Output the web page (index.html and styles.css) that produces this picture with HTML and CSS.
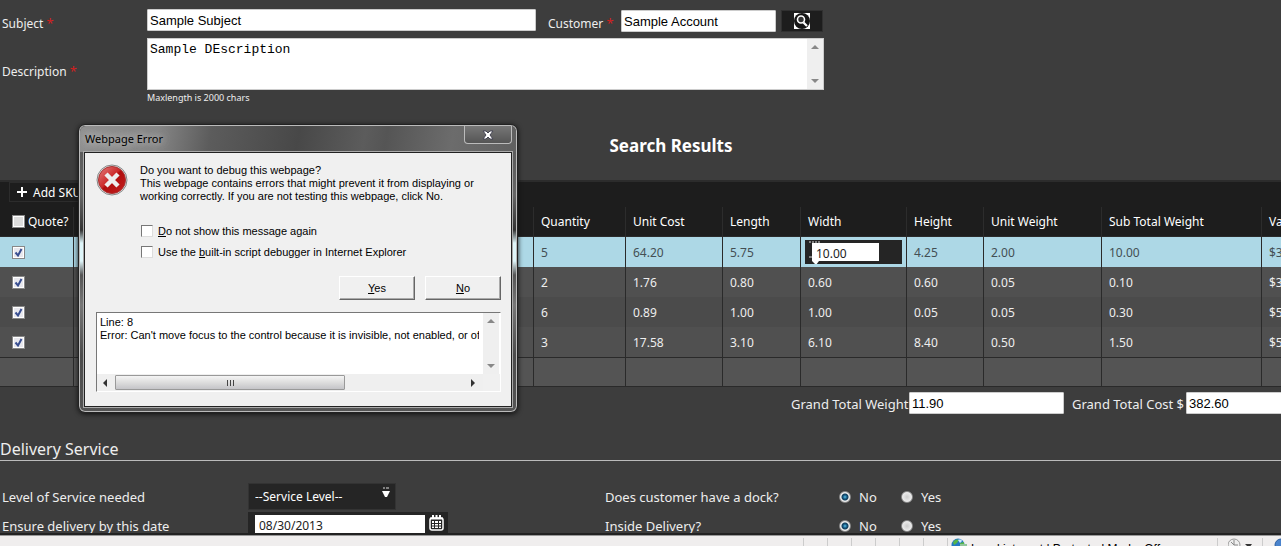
FILE: index.html
```html
<!DOCTYPE html>
<html lang="en">
<head>
  <meta charset="UTF-8">
  <title>Quote Request</title>
  <link rel="stylesheet" href="styles.css">
</head>
<body>

  <main class="page">

    <form class="request-form">
      <div class="form-row">
        <label class="form-label" for="subject">Subject <span class="required">*</span></label>
        <input class="text-box subject" type="text" id="subject" value="Sample Subject">
        <label class="customer-label" for="customer">Customer <span class="required">*</span></label>
        <input class="text-box customer" type="text" id="customer" value="Sample Account">
        <button class="lookup" type="button" aria-label="Find customer">
          <svg width="16" height="16" viewBox="0 0 16 16">
            <rect width="16" height="16" fill="#fff"/>
            <circle cx="8" cy="8" r="8" fill="#151515"/>
            <circle cx="7" cy="6.500" r="3.500" fill="#333" stroke="#fff" stroke-width="1.600"/>
            <path d="M9.500 9.500L13 13" stroke="#fff" stroke-width="2.200"/>
          </svg>
        </button>
      </div>
      <div class="form-row description-row">
        <label class="form-label" for="description">Description <span class="required">*</span></label>
        <div class="description-box">
          <textarea id="description">Sample DEscription</textarea>
          <div class="scroll-y"><i class="arrow up"></i><i class="arrow down"></i></div>
        </div>
      </div>
      <p class="hint">Maxlength is 2000 chars</p>
    </form>

    <h2 class="results-title">Search Results</h2>

    <div class="grid-wrap">
      <div class="grid-toolbar">
        <button class="add-sku" type="button">
          <svg width="12" height="12" viewBox="0 0 12 12"><path d="M6 1v10M1 6h10" stroke="#fff" stroke-width="2"/></svg>
          Add SKU
        </button>
      </div>
      <table class="grid">
        <colgroup>
          <col class="col-quote"><col class="col-item"><col class="col-qty"><col class="col-cost"><col class="col-length">
          <col class="col-width"><col class="col-height"><col class="col-weight"><col class="col-subtotal"><col class="col-value">
        </colgroup>
        <thead>
          <tr>
            <th><label class="quote-all"><input class="tick" type="checkbox">Quote?</label></th>
            <th></th><th>Quantity</th><th>Unit Cost</th><th>Length</th><th>Width</th><th>Height</th><th>Unit Weight</th><th>Sub Total Weight</th><th>Value</th>
          </tr>
        </thead>
        <tbody>
          <tr class="selected">
            <td><input class="tick" type="checkbox" aria-label="Quote" checked></td>
            <td></td><td>5</td><td>64.20</td><td>5.75</td>
            <td class="edit-cell">
              <div class="editor">
                <input type="text" aria-label="Width" value="10.00">
                <svg class="spinner" width="16" height="24" viewBox="0 0 16 24">
                  <path d="M4 2h2M7 2h2M10 2h2M13 2h2M4 17h3" stroke="#ddd"/>
                  <path d="M7 21h7l-3 4z" fill="#fff"/>
                </svg>
              </div>
            </td>
            <td>4.25</td><td>2.00</td><td>10.00</td><td>$369</td>
          </tr>
          <tr>
            <td><input class="tick" type="checkbox" aria-label="Quote" checked></td>
            <td></td><td>2</td><td>1.76</td><td>0.80</td><td>0.60</td><td>0.60</td><td>0.05</td><td>0.10</td><td>$3.52</td>
          </tr>
          <tr class="alt">
            <td><input class="tick" type="checkbox" aria-label="Quote" checked></td>
            <td></td><td>6</td><td>0.89</td><td>1.00</td><td>1.00</td><td>0.05</td><td>0.05</td><td>0.30</td><td>$5.34</td>
          </tr>
          <tr>
            <td><input class="tick" type="checkbox" aria-label="Quote" checked></td>
            <td></td><td>3</td><td>17.58</td><td>3.10</td><td>6.10</td><td>8.40</td><td>0.50</td><td>1.50</td><td>$52.74</td>
          </tr>
        </tbody>
        <tfoot>
          <tr><td></td><td></td><td></td><td></td><td></td><td></td><td></td><td></td><td></td><td></td></tr>
        </tfoot>
      </table>
    </div>

    <div class="totals">
      <label for="totalWeight">Grand Total Weight</label>
      <input class="text-box total" type="text" id="totalWeight" value="11.90">
      <label class="cost-label" for="totalCost">Grand Total Cost $</label>
      <input class="text-box total" type="text" id="totalCost" value="382.60">
    </div>

    <h3 class="section-title">Delivery Service</h3>

    <form class="delivery">
      <label for="service">Level of Service needed</label>
      <div class="select-box">
        <select id="service"><option>--Service Level--</option></select>
        <svg class="select-arrow" width="8" height="11" viewBox="0 0 8 11">
          <path d="M1 1h2M4 1h3" stroke="#ddd"/><path d="M0 4h8l-3 6h-2z" fill="#fff"/>
        </svg>
      </div>
      <span>Does customer have a dock?</span>
      <div class="choices">
        <label><input type="radio" name="dock" checked>No</label>
        <label><input type="radio" name="dock">Yes</label>
      </div>

      <label for="deliveryDate">Ensure delivery by this date</label>
      <div class="date-box">
        <input type="text" id="deliveryDate" value="08/30/2013">
        <button type="button" aria-label="Pick date">
          <svg width="15" height="16" viewBox="0 0 15 16">
            <rect x="1" y="3" width="13" height="12" rx="2" fill="none" stroke="#fff" stroke-width="1.500"/>
            <path d="M1 3.500h13M4 0v3M7.500 0v3M11 0v3" stroke="#fff" stroke-width="2"/>
            <path d="M3 6h9v7H3z" fill="#fff"/>
            <path d="M3 8.500h9M3 11h9M5.500 6v7M9.500 6v7" stroke="#252525"/>
          </svg>
        </button>
      </div>
      <span>Inside Delivery?</span>
      <div class="choices">
        <label><input type="radio" name="inside" checked>No</label>
        <label><input type="radio" name="inside">Yes</label>
      </div>
    </form>
  </main>

  <footer class="status-bar">
    <span class="pane"></span><span class="pane"></span><span class="pane"></span>
    <span class="pane"></span><span class="pane"></span><span class="pane"></span>
    <span class="zone">
      <svg width="16" height="16" viewBox="0 0 16 16">
        <circle cx="7" cy="7" r="6.500" fill="#2479c4"/>
        <path d="M2 4c2-3 5-3 6-2L6 5 3 7zM9 5l4-1v5l-3 2z" fill="#55b649"/>
        <path d="M7 2c2-1 4 0 4 1L9 5z" fill="#cdeaff"/>
        <rect x="9" y="6" width="7" height="6" fill="#90c49a"/>
      </svg>
      Local intranet | Protected Mode: Off
    </span>
    <span class="privacy">
      <svg width="25" height="14" viewBox="0 0 25 14">
        <circle cx="6" cy="7" r="6" fill="#eee" stroke="#999"/><path d="M6 2v5h4M3 4l3 3" stroke="#888" fill="none"/>
        <path d="M17 6h7l-3 4z" fill="#333"/>
      </svg>
    </span>
    <span class="zoom-level">
      <svg width="14" height="14" viewBox="0 0 14 14"><circle cx="7" cy="7" r="6" fill="#4a83cc" stroke="#2d5f9f"/></svg>
    </span>
  </footer>

  <!-- Script error dialog -->
  <div class="dialog" role="dialog" aria-labelledby="dialogTitle">
    <div class="dialog-bar">
      <span class="dialog-title" id="dialogTitle">Webpage Error</span>
      <button class="dialog-close" type="button" aria-label="Close">
        <svg width="12" height="10" viewBox="0 0 12 10">
          <path d="M1 1h3l2 2 2-2h3L8 5l3 4H8L6 7 4 9H1l3-4z" fill="#fff" stroke="#454554"/>
        </svg>
      </button>
    </div>
    <div class="dialog-body">
      <div class="message">
        <svg width="32" height="32" viewBox="0 0 32 32">
          <defs>
            <linearGradient id="red" x1="0" y1="0" x2="1" y2="1">
              <stop offset="0" stop-color="#e58080"/><stop offset=".45" stop-color="#cb2929"/>
              <stop offset=".5" stop-color="#b00d0d"/><stop offset="1" stop-color="#c52020"/>
            </linearGradient>
          </defs>
          <circle cx="16" cy="16" r="15" fill="#ddd" stroke="#888"/>
          <circle cx="16" cy="16" r="13.500" fill="url(#red)" stroke="#a33"/>
          <path d="M10 10l12 12M22 10L10 22" stroke="#eee" stroke-width="4.500"/>
        </svg>
        <p>Do you want to debug this webpage?<br>
          This webpage contains errors that might prevent it from displaying or<br>
          working correctly. If you are not testing this webpage, click No.</p>
      </div>
      <div class="options">
        <label><input type="checkbox"><span><u>D</u>o not show this message again</span></label>
        <label><input type="checkbox"><span>Use the <u>b</u>uilt-in script debugger in Internet Explorer</span></label>
      </div>
      <div class="actions">
        <button type="button"><u>Y</u>es</button>
        <button type="button"><u>N</u>o</button>
      </div>
      <div class="details">
        <div class="details-text">Line: 8<br>Error: Can't move focus to the control because it is invisible, not enabled, or of</div>
        <div class="scroll-y"><i class="arrow up"></i><i class="arrow down"></i></div>
        <div class="scroll-x">
          <i class="arrow left"></i>
          <div class="thumb"><i></i><i></i><i></i></div>
          <i class="arrow right"></i>
        </div>
        <div class="corner"></div>
      </div>
    </div>
  </div>

</body>
</html>
```
FILE: styles.css
```css
* {
  box-sizing: border-box;
}

body {
  margin: 0;
  height: 100vh;
  display: flex;
  flex-direction: column;
  overflow: hidden;
  position: relative;
  background: #3d3d3d;
  color: #eee;
  font-family: "Noto Sans", sans-serif;
  font-size: 12px;
}

input, select, button, textarea {
  margin: 0;
  font-family: inherit;
  font-size: inherit;
}

button {
  padding: 0;
}

.page {
  flex: 1;
  min-height: 0;
  overflow: hidden;
  border-bottom: 2px solid #222;
}

/* Request form */
.request-form {
  padding-top: 8px;
}

.form-row {
  display: flex;
  align-items: center;
}

.form-label {
  width: 147px;
  padding: 6px 0 0 2px;
}

.required {
  color: #d32020;
  font-size: 13px;
  line-height: 12px;
}

.text-box {
  height: 22px;
  padding: 0 2px;
  border: 1px solid #ccc;
  border-radius: 1px;
  background: #fff;
  color: #000;
  font-family: "Liberation Sans", sans-serif;
  font-size: 13px;
}

.subject {
  width: 389px;
}

.customer-label {
  width: 85px;
  padding: 6px 0 0 12px;
}

.customer {
  width: 155px;
}

.lookup {
  display: flex;
  align-items: center;
  justify-content: center;
  width: 42px;
  height: 22px;
  margin-left: 5px;
  border: 1px solid #303030;
  background: #1d1d1d;
}

.customer,
.lookup {
  margin-top: 2px;
}

.description-row {
  margin-top: 6px;
}

.description-row .form-label {
  padding-top: 14px;
}

.description-box {
  display: flex;
  width: 677px;
  height: 52px;
  border: 1px solid #ccc;
  background: #fff;
}

.description-box textarea {
  flex: 1;
  padding: 3px 2px;
  border: 0;
  resize: none;
  overflow: hidden;
  color: #000;
  font-family: "Liberation Mono", monospace;
  font-size: 13px;
  line-height: 15px;
}

.hint {
  margin: 0 0 0 147px;
  font-size: 9px;
  line-height: 16px;
}

.scroll-y {
  display: flex;
  flex-direction: column;
  align-items: center;
  justify-content: space-between;
  width: 16px;
  padding: 6px 0;
  background: #efefef;
}

.arrow {
  border: 4px solid transparent;
}

.arrow.up {
  border-top: 0;
  border-bottom-color: #888;
}

.arrow.down {
  border-bottom: 0;
  border-top-color: #888;
}

.arrow.left {
  border-left: 0;
  border-right-color: #333;
}

.arrow.right {
  border-right: 0;
  border-left-color: #333;
}

/* Results */
.results-title {
  width: 1342px;
  margin: 28px 0 22px;
  text-align: center;
  color: #fff;
  font-size: 17px;
  font-weight: 700;
  line-height: 24px;
}

.grid-wrap {
  overflow: hidden;
  border-top: 2px solid #2c2c2c;
}

.grid-toolbar {
  height: 25px;
  background: #1d1d1d;
  padding: 0 9px;
}

.add-sku {
  display: flex;
  align-items: center;
  gap: 5px;
  width: 90px;
  height: 20px;
  padding-left: 6px;
  border: 1px solid #2c2c2c;
  background: #1d1d1d;
  color: #fff;
}

.grid {
  width: 1342px;
  table-layout: fixed;
  border-collapse: separate;
  border-spacing: 0;
}

.col-quote { width: 74px; }
.col-item { width: 460px; }
.col-qty { width: 92px; }
.col-cost { width: 97px; }
.col-length { width: 78px; }
.col-width { width: 106px; }
.col-height { width: 77px; }
.col-weight { width: 118px; }
.col-subtotal { width: 160px; }

.grid th,
.grid td {
  height: 30px;
  padding: 0 7px;
  border-right: 1px solid #2a2a2a;
  background: #505050;
  text-align: left;
  font-weight: normal;
  white-space: nowrap;
}

.grid th:first-child,
.grid td:first-child {
  padding-left: 12px;
}

.grid th {
  border-right-color: #2c2c2c;
  border-bottom: 1px solid #2a2a2a;
  background: #1d1d1d;
  color: #fff;
}

.grid .alt td {
  background: #4b4b4b;
}

.grid .selected td {
  background: #add8e6;
  color: #444f54;
}

.grid tfoot td {
  border-top: 1px solid #2a2a2a;
  border-bottom: 1px solid #2a2a2a;
  background: #545454;
}

.quote-all {
  display: flex;
  align-items: center;
  gap: 3px;
}

.tick {
  appearance: none;
  display: block;
  flex: none;
  width: 13px;
  height: 13px;
  border: 1px solid #888;
  box-shadow: inset 0 0 0 1px #fff;
  background: #ddd;
}

.tick:checked {
  background: #e8e8ee url("data:image/svg+xml,%3Csvg xmlns='http://www.w3.org/2000/svg' viewBox='0 0 11 11'%3E%3Cpath d='M2.500 5.500L5 8.500L8.500 2' fill='none' stroke='%23394f91' stroke-width='2'/%3E%3C/svg%3E");
}

.grid .edit-cell {
  padding: 0 4px;
}

.editor {
  position: relative;
  height: 24px;
  padding: 3px 7px;
  background: #252525;
}

.editor input {
  display: block;
  width: 67px;
  height: 18px;
  padding: 2px 4px 0;
  border: 0;
  background: #fff;
  color: #222;
}

.spinner {
  position: absolute;
  left: 0;
  top: 0;
}

.totals {
  display: flex;
  align-items: center;
  padding: 5px 0 0 791px;
  font-size: 13px;
  white-space: nowrap;
}

.totals label {
  flex: none;
  width: 118px;
  padding-top: 2px;
}

.totals .cost-label {
  width: 114px;
  margin-left: 8px;
}

.total {
  flex: none;
  width: 155px;
}

/* Delivery */
.section-title {
  margin: 24px 0 22px;
  border-bottom: 1px solid #bbb;
  font-size: 16px;
  font-weight: normal;
  line-height: 22px;
}

.delivery {
  display: grid;
  grid-template-columns: 246px 357px 234px 1fr;
  row-gap: 2px;
  align-items: center;
  padding-left: 2px;
  font-size: 13px;
}

.select-box {
  position: relative;
  width: 148px;
}

.select-box select {
  appearance: none;
  display: block;
  width: 100%;
  height: 27px;
  padding: 0 6px;
  border: 1px solid #333;
  border-radius: 0;
  background: #252525;
  color: #fff;
  font-size: 12px;
}

.select-arrow {
  position: absolute;
  right: 6px;
  top: 4px;
}

.date-box {
  display: flex;
  gap: 4px;
  width: 200px;
  height: 27px;
  padding: 3px 7px;
  background: #252525;
}

.date-box input {
  width: 170px;
  height: 21px;
  padding: 0 4px;
  border: 0;
  background: #fff;
  color: #222;
  font-size: 12px;
}

.date-box button {
  height: 16px;
  border: 0;
  background: none;
}

.choices {
  display: flex;
}

.choices label {
  display: flex;
  align-items: center;
  gap: 8px;
  width: 62px;
}

.choices input {
  appearance: none;
  width: 12px;
  height: 12px;
  border: 1px solid #888;
  border-radius: 50%;
  background: radial-gradient(circle, #ccc 0, #eee 70%);
}

.choices input:checked {
  background: radial-gradient(circle, #5bc4e8 0, #145580 2px, #14405c 3px, #eee 4px);
}

/* Status bar, mostly below the fold */
.status-bar {
  display: flex;
  flex: none;
  justify-content: flex-end;
  height: 11px;
  padding-top: 2px;
  overflow: hidden;
  background: #f0eeee;
  border-top: 1px solid #999;
  color: #000;
  white-space: nowrap;
}

.pane {
  width: 24px;
  border-left: 1px solid #ccc;
}

.zone {
  display: flex;
  gap: 4px;
  width: 270px;
  padding-left: 3px;
  border-left: 1px solid #ccc;
  font-family: "Liberation Sans", sans-serif;
  line-height: 22px;
}

.zone svg,
.privacy svg,
.zoom-level svg {
  flex: none;
}

.privacy {
  width: 45px;
  padding-left: 10px;
  border-left: 1px solid #ccc;
}

.zoom-level {
  width: 19px;
  padding-left: 11px;
  border-left: 1px solid #ccc;
}

/* Dialog */
.dialog {
  position: absolute;
  left: 78px;
  top: 124px;
  width: 440px;
  padding: 0 5px 5px;
  border: 1px solid #222;
  border-radius: 7px;
  background: linear-gradient(#555 0, #666 70px, #333 105px, #dff6fa 118px, #dff6fa 136px, #555 150px, #777 180px, #4c4c4c 230px, #555 100%);
  box-shadow: inset 0 0 0 1px #bbb, 0 1px 5px #111;
  color: #000;
  font-family: "Liberation Sans", sans-serif;
  font-size: 11px;
}

.dialog-bar {
  display: flex;
  justify-content: space-between;
  height: 26px;
  margin: 1px -4px 0;
  padding: 0 4px;
  border-radius: 6px 6px 0 0;
  background: linear-gradient(100deg, #909090 0, #858585 18%, #5c5c5c 30%, #484848 50%, #5c5c5c 65%, #555 70%, #6c6c6c 85%, #606060 100%);
}

.dialog-title {
  padding-left: 1px;
  line-height: 25px;
  font-family: "Noto Sans", sans-serif;
  text-shadow: 0 0 8px #ccc, 0 0 8px #bbb;
}

.dialog-close {
  display: flex;
  align-items: center;
  justify-content: center;
  width: 48px;
  height: 18px;
  border: 1px solid #bbb;
  border-top: 0;
  border-radius: 0 0 4px 4px;
  background: linear-gradient(#777, #555);
}

.dialog-body {
  padding: 11px 10px 14px 11px;
  border: 1px solid #222;
  outline: 1px solid #aaa;
  background: #f0f0f0;
}

.message {
  display: flex;
  gap: 12px;
}

.message p {
  margin: 0;
  line-height: 13px;
  white-space: nowrap;
}

.options {
  display: flex;
  flex-direction: column;
  gap: 8px;
  margin: 21px 0 0 45px;
}

.options label {
  display: flex;
  align-items: center;
  gap: 5px;
  height: 13px;
}

.options input {
  appearance: none;
  width: 12px;
  height: 12px;
  border: 1px solid;
  border-color: #777 #ddd #ddd #777;
  background: #fff;
}

.actions {
  display: flex;
  justify-content: flex-end;
  gap: 10px;
  margin: 18px 0 12px;
}

.actions button {
  width: 76px;
  height: 24px;
  border: 1px solid;
  border-color: #fff #666 #666 #fff;
  box-shadow: inset -1px -1px #aaa;
  background: #f0f0f0;
  color: #000;
}

.details {
  display: grid;
  grid-template-columns: 1fr 17px;
  grid-template-rows: 61px 17px;
  border: 1px solid;
  border-color: #777 #fff #fff #777;
  background: #fff;
}

.details-text {
  padding: 3px;
  margin-right: 4px;
  overflow: hidden;
  line-height: 13px;
  white-space: nowrap;
}

.scroll-x {
  display: flex;
  align-items: center;
  padding: 0 8px 0 6px;
  background: #efefef;
}

.scroll-x .thumb {
  display: flex;
  align-items: center;
  justify-content: center;
  gap: 2px;
  width: 230px;
  height: 15px;
  margin: 0 auto 0 8px;
  border: 1px solid #999;
  border-radius: 1px;
  background: linear-gradient(#f4f4f4, #ddd 50%, #c4c4c8);
}

.thumb i {
  width: 1px;
  height: 6px;
  background: #444;
}

.corner {
  background: #f0f0f0;
}
```
